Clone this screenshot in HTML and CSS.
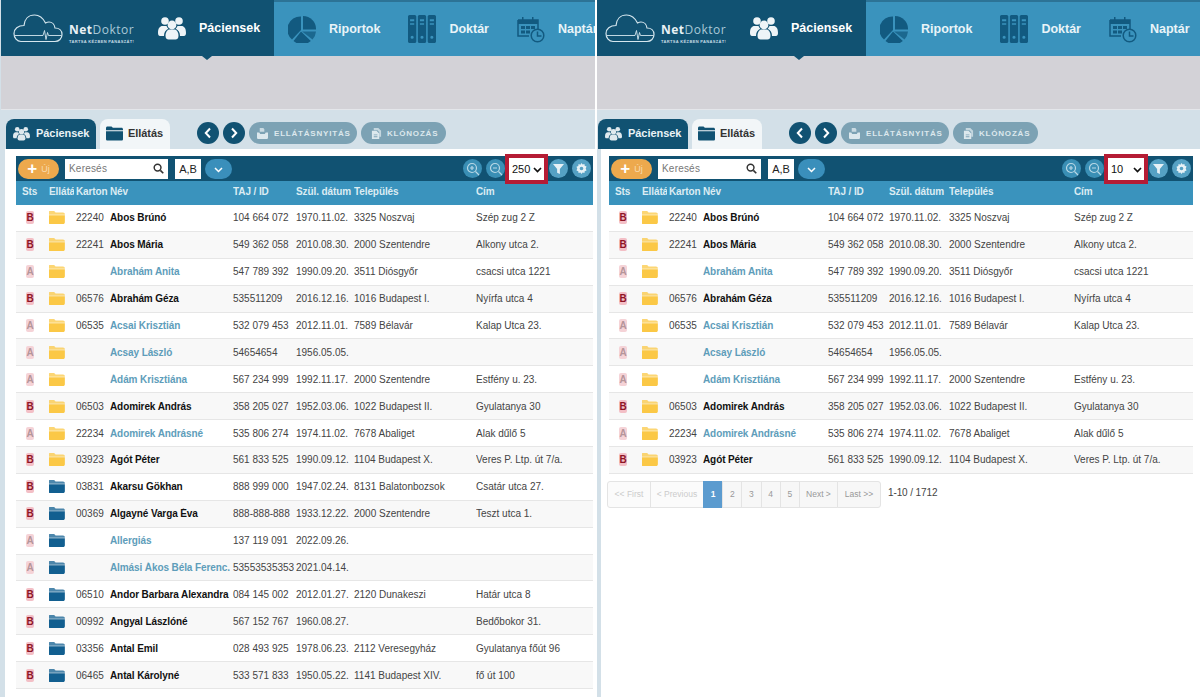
FILE: index.html
```html
<!DOCTYPE html>
<html lang="hu">

<head>
    <meta charset="UTF-8">
    <meta name="viewport" content="width=device-width, initial-scale=1.0">
    <title>NetDoktor</title>
    <link rel="stylesheet" href="styles.css">
</head>

<body>
    <svg class="sprite" xmlns="http://www.w3.org/2000/svg">
        <symbol id="i-users" viewBox="0 0 28 24">
            <circle cx="7" cy="5" r="3.8"/><circle cx="21" cy="5" r="3.8"/><circle cx="14" cy="9" r="4.4"/>
            <path d="M0 17c0-5 2-7 4.5-7h4c.5 1 1 2 1.800 2.800C7.500 14 6 16.500 6 20H2c-1.200 0-2-1-2-3z"/>
            <path d="M28 17c0-5-2-7-4.500-7h-4c-.5 1-1 2-1.800 2.800C20.500 14 22 16.500 22 20h4c1.200 0 2-1 2-3z"/>
            <path d="M7.500 20c0-4 2-6.500 4-6.500h5c2 0 4 2.500 4 6.500 0 2.500-1.500 3.500-3 3.500h-7c-1.500 0-3-1-3-3.500z"/>
        </symbol>
        <symbol id="i-pie" viewBox="0 0 28 28">
            <path d="M13 1.500v13.500l-9 9.500A13 13 0 0 1 13 1.500z"/>
            <path d="M15 14.500V1a13 13 0 0 1 13 13.500z"/>
            <path d="M14 16.500h14a13.500 13.500 0 0 1-3.500 8z" opacity=".75"/>
            <path d="M13 16.500l9.800 9.500A13 13 0 0 1 5.500 26z"/>
        </symbol>
        <symbol id="i-binders" viewBox="0 0 27 27">
            <path d="M0 1.500C0 .7.700 0 1.500 0h5C7.300 0 8 .7 8 1.500v24c0 .8-.7 1.500-1.500 1.500h-5C.7 27 0 26.300 0 25.500zM2 4v2h4V4zM2 8v1.500h4V8zM4 20a1.500 1.500 0 1 0 0 3 1.500 1.500 0 0 0 0-3z" fill-rule="evenodd"/>
            <path d="M9.500 1.500C9.500.7 10.200 0 11 0h5c.8 0 1.500.7 1.500 1.500v24c0 .8-.7 1.500-1.500 1.500h-5c-.8 0-1.500-.7-1.500-1.500zM11.500 4v2h4V4zM11.500 8v1.500h4V8zM13.500 20a1.500 1.500 0 1 0 0 3 1.500 1.500 0 0 0 0-3z" fill-rule="evenodd"/>
            <path d="M19 1.500C19 .7 19.700 0 20.500 0h5c.8 0 1.500.7 1.500 1.500v24c0 .8-.7 1.500-1.500 1.500h-5c-.8 0-1.500-.7-1.500-1.500zM21 4v2h4V4zM21 8v1.500h4V8zM23 20a1.500 1.500 0 1 0 0 3 1.500 1.500 0 0 0 0-3z" fill-rule="evenodd"/>
        </symbol>
        <symbol id="i-calendar" viewBox="0 0 28 28">
            <path d="M1 5h20v9" fill="none" stroke="currentColor" stroke-width="1.500"/>
            <path d="M1 5v16h11" fill="none" stroke="currentColor" stroke-width="1.500"/>
            <rect x="1" y="5" width="20" height="4"/>
            <rect x="5" y="2" width="1.500" height="5"/><rect x="15" y="2" width="1.500" height="5"/>
            <rect x="4" y="11" width="4" height="3"/><rect x="9" y="11" width="4" height="3"/><rect x="14" y="11" width="4" height="3"/>
            <rect x="4" y="15.500" width="4" height="3"/><rect x="9" y="15.500" width="4" height="3"/>
            <circle cx="20.500" cy="20.500" r="6.300" fill="none" stroke="currentColor" stroke-width="1.500"/>
            <path d="M20.500 16.500v4.500h4" fill="none" stroke="currentColor" stroke-width="1.500"/>
        </symbol>
        <symbol id="i-folder" viewBox="0 0 18 14">
            <path d="M0 2C0 .8.800 0 2 0h4.500L8 1.500h8c1.200 0 2 .8 2 2V4H0z" opacity=".75"/>
            <path d="M0 4.500h18V12c0 1.200-.8 2-2 2H2c-1.200 0-2-.8-2-2z"/>
        </symbol>
        <symbol id="i-tab-folder" viewBox="0 0 18 15">
            <path d="M0 1.500C0 .7.700 0 1.500 0h4.300L7.300 1.500h9.200c.8 0 1.500.7 1.500 1.500v1H0z"/>
            <path d="M0 5h18v8.500c0 .8-.7 1.500-1.500 1.500h-15C.7 15 0 14.300 0 13.500z"/>
        </symbol>
        <symbol id="i-search" viewBox="0 0 12 12">
            <circle cx="5" cy="5" r="3.700" fill="none" stroke="currentColor" stroke-width="1.600"/>
            <path d="M8 8l3.200 3.200" fill="none" stroke="currentColor" stroke-width="1.800"/>
        </symbol>
        <symbol id="i-zoom-in" viewBox="0 0 14 14">
            <circle cx="6" cy="6" r="4.500" fill="none" stroke="currentColor" stroke-width="1.200"/>
            <path d="M9.500 9.500l3.500 3.500M4 6h4M6 4v4" fill="none" stroke="currentColor" stroke-width="1.200"/>
        </symbol>
        <symbol id="i-zoom-out" viewBox="0 0 14 14">
            <circle cx="6" cy="6" r="4.500" fill="none" stroke="currentColor" stroke-width="1.200"/>
            <path d="M9.500 9.500l3.500 3.500M4 6h4" fill="none" stroke="currentColor" stroke-width="1.200"/>
        </symbol>
        <symbol id="i-filter" viewBox="0 0 12 12"><path d="M0 1h12L7.500 6.500V12l-3-1.500v-4z"/></symbol>
        <symbol id="i-gear" viewBox="0 0 12 12">
            <path d="M6 0l1.200 1.700 2-.6.300 2 2 .8-.9 2.100.9 2.100-2 .8-.3 2-2-.6L6 12l-1.200-1.700-2 .6-.3-2-2-.8.9-2.100L.5 4l2-.8.3-2 2 .6zM6 4a2 2 0 1 0 0 4 2 2 0 0 0 0-4z" fill-rule="evenodd"/>
        </symbol>
        <symbol id="i-open" viewBox="0 0 12 12">
            <path d="M3 0h4l1 1.500V4H3z" opacity=".8"/>
            <path d="M0 5h2.500l1 1.500h5l1-1.500H12v5.500c0 .8-.7 1.500-1.500 1.500h-9C.7 12 0 11.300 0 10.500z"/>
        </symbol>
        <symbol id="i-doc" viewBox="0 0 12 12">
            <path d="M3 0h5l3 3v6.500H9V4.500L7 2.500H3z" opacity=".75"/>
            <path d="M1 3h5l3 3v6H1zM3 7v1h4V7zM3 9v1h4V9z" fill-rule="evenodd"/>
        </symbol>
        <symbol id="i-prev" viewBox="0 0 8 12"><path d="M6 1.500L1.800 6 6 10.500" fill="none" stroke="currentColor" stroke-width="2"/></symbol>
        <symbol id="i-next" viewBox="0 0 8 12"><path d="M2 1.500L6.200 6 2 10.500" fill="none" stroke="currentColor" stroke-width="2"/></symbol>
        <symbol id="i-logo" viewBox="0 0 50 29">
            <path d="M8 27.500h34c4 0 7-3 7-7s-3-6.500-7-6.500c-.5-3.500-3-6-6-6-1.500 0-2.500.5-3.500 1C30 4 26 1 21.500 1c-6 0-10 4-10.500 10.500C5 11.500 1 15 1 19.500s3 8 7 8z" fill="none" stroke="currentColor" stroke-width="1.200"/>
            <path d="M2 21.500h28l1.500-5 1.500 9 1.500-7 1 3h13" fill="none" stroke="currentColor" stroke-width=".9"/>
        </symbol>
    </svg>

    <div class="page">
        <section class="panel panel-left">
            <div class="panel-inner">
                <header class="topbar">
                    <div class="brand-area">
                        <div class="brand">
                            <svg class="brand-cloud"><use href="#i-logo"/></svg>
                            <div class="brand-text">
                                <p class="brand-name"><b>Net</b>Doktor</p>
                                <p class="brand-tag">TARTSA KÉZBEN PANASZÁT!</p>
                            </div>
                        </div>
                        <a class="nav-item active"><svg class="nav-icon"><use href="#i-users"/></svg>Páciensek</a>
                    </div>
                    <nav class="nav">
                        <a class="nav-item"><svg class="nav-icon"><use href="#i-pie"/></svg>Riportok</a>
                        <a class="nav-item"><svg class="nav-icon"><use href="#i-binders"/></svg>Doktár</a>
                        <a class="nav-item"><svg class="nav-icon"><use href="#i-calendar"/></svg>Naptár</a>
                    </nav>
                </header>
                <div class="gray-band"></div>
                <div class="tabbar">
                    <a class="tab tab-dark"><svg class="tab-icon"><use href="#i-users"/></svg>Páciensek</a>
                    <a class="tab tab-light"><svg class="tab-icon"><use href="#i-tab-folder"/></svg>Ellátás</a>
                    <div class="tab-actions">
                        <button class="round-btn"><svg class="round-icon"><use href="#i-prev"/></svg></button>
                        <button class="round-btn"><svg class="round-icon"><use href="#i-next"/></svg></button>
                        <button class="pill pill-wide"><svg class="pill-icon"><use href="#i-open"/></svg>ELLÁTÁSNYITÁS</button>
                        <button class="pill"><svg class="pill-icon"><use href="#i-doc"/></svg>KLÓNOZÁS</button>
                    </div>
                </div>
                <div class="content">
                    <div class="grid">
                        <div class="toolbar">
                            <button class="new-btn"><span class="plus">+</span>Új</button>
                            <div class="search"><span>Keresés</span><svg class="search-icon"><use href="#i-search"/></svg></div>
                            <div class="ab-box">A,B</div>
                            <button class="chevron-btn"><svg width="9" height="6" viewBox="0 0 9 6"><path d="M1 1l3.500 3.500L8 1" fill="none" stroke="#fff" stroke-width="1.500"/></svg></button>
                            <div class="tools">
                                <span class="tool"><svg class="tool-line"><use href="#i-zoom-in"/></svg></span>
                                <span class="tool"><svg class="tool-line"><use href="#i-zoom-out"/></svg></span>
                                <div class="page-size">
                                    <select><option>250</option></select>
                                    <svg class="select-arrow" viewBox="0 0 9 6"><path d="M1 1l3.500 3.500L8 1" fill="none" stroke="#111" stroke-width="1.700"/></svg>
                                </div>
                                <span class="tool tool-solid"><svg class="tool-small"><use href="#i-filter"/></svg></span>
                                <span class="tool tool-solid"><svg class="tool-small"><use href="#i-gear"/></svg></span>
                            </div>
                        </div>
                        <div class="row head"><span>Sts</span><span>Ellátás</span><span>Karton</span><span>Név</span><span>TAJ / ID</span><span>Szül. dátum</span><span>Település</span><span>Cím</span></div>

                        <div class="row"><span><i class="badge">B</i></span><span><svg class="folder yellow"><use href="#i-folder"/></svg></span><span>22240</span><span class="name">Abos Brúnó</span><span>104 664 072</span><span>1970.11.02.</span><span>3325 Noszvaj</span><span>Szép zug 2 Z</span></div>
                        <div class="row"><span><i class="badge">B</i></span><span><svg class="folder yellow"><use href="#i-folder"/></svg></span><span>22241</span><span class="name">Abos Mária</span><span>549 362 058</span><span>2010.08.30.</span><span>2000 Szentendre</span><span>Alkony utca 2.</span></div>
                        <div class="row"><span><i class="badge faded">A</i></span><span><svg class="folder yellow"><use href="#i-folder"/></svg></span><span></span><span class="name link">Ábrahám Anita</span><span>547 789 392</span><span>1990.09.20.</span><span>3511 Diósgyőr</span><span>csacsi utca 1221</span></div>
                        <div class="row"><span><i class="badge">B</i></span><span><svg class="folder yellow"><use href="#i-folder"/></svg></span><span>06576</span><span class="name">Ábrahám Géza</span><span>535511209</span><span>2016.12.16.</span><span>1016 Budapest I.</span><span>Nyírfa utca 4</span></div>
                        <div class="row"><span><i class="badge faded">A</i></span><span><svg class="folder yellow"><use href="#i-folder"/></svg></span><span>06535</span><span class="name link">Acsai Krisztián</span><span>532 079 453</span><span>2012.11.01.</span><span>7589 Bélavár</span><span>Kalap Utca 23.</span></div>
                        <div class="row"><span><i class="badge faded">A</i></span><span><svg class="folder yellow"><use href="#i-folder"/></svg></span><span></span><span class="name link">Acsay László</span><span>54654654</span><span>1956.05.05.</span><span></span><span></span></div>
                        <div class="row"><span><i class="badge faded">A</i></span><span><svg class="folder yellow"><use href="#i-folder"/></svg></span><span></span><span class="name link">Ádám Krisztiána</span><span>567 234 999</span><span>1992.11.17.</span><span>2000 Szentendre</span><span>Estfény u. 23.</span></div>
                        <div class="row"><span><i class="badge">B</i></span><span><svg class="folder yellow"><use href="#i-folder"/></svg></span><span>06503</span><span class="name">Adomirek András</span><span>358 205 027</span><span>1952.03.06.</span><span>1022 Budapest II.</span><span>Gyulatanya 30</span></div>
                        <div class="row"><span><i class="badge faded">A</i></span><span><svg class="folder yellow"><use href="#i-folder"/></svg></span><span>22234</span><span class="name link">Adomirek Andrásné</span><span>535 806 274</span><span>1974.11.02.</span><span>7678 Abaliget</span><span>Alak dűlő 5</span></div>
                        <div class="row"><span><i class="badge">B</i></span><span><svg class="folder yellow"><use href="#i-folder"/></svg></span><span>03923</span><span class="name">Agót Péter</span><span>561 833 525</span><span>1990.09.12.</span><span>1104 Budapest X.</span><span>Veres P. Ltp. út 7/a.</span></div>
                        <div class="row"><span><i class="badge">B</i></span><span><svg class="folder blue"><use href="#i-folder"/></svg></span><span>03831</span><span class="name">Akarsu Gökhan</span><span>888 999 000</span><span>1947.02.24.</span><span>8131 Balatonbozsok</span><span>Csatár utca 27.</span></div>
                        <div class="row"><span><i class="badge">B</i></span><span><svg class="folder blue"><use href="#i-folder"/></svg></span><span>00369</span><span class="name">Algayné Varga Éva</span><span>888-888-888</span><span>1933.12.22.</span><span>2000 Szentendre</span><span>Teszt utca 1.</span></div>
                        <div class="row"><span><i class="badge faded">A</i></span><span><svg class="folder blue"><use href="#i-folder"/></svg></span><span></span><span class="name link">Allergiás</span><span>137 119 091</span><span>2022.09.26.</span><span></span><span></span></div>
                        <div class="row"><span><i class="badge faded">A</i></span><span><svg class="folder blue"><use href="#i-folder"/></svg></span><span></span><span class="name link">Almási Ákos Béla Ferenc.</span><span>53553535353</span><span>2021.04.14.</span><span></span><span></span></div>
                        <div class="row"><span><i class="badge">B</i></span><span><svg class="folder blue"><use href="#i-folder"/></svg></span><span>06510</span><span class="name">Andor Barbara Alexandra</span><span>084 145 002</span><span>2012.01.27.</span><span>2120 Dunakeszi</span><span>Határ utca 8</span></div>
                        <div class="row"><span><i class="badge">B</i></span><span><svg class="folder blue"><use href="#i-folder"/></svg></span><span>00992</span><span class="name">Angyal Lászlóné</span><span>567 152 767</span><span>1960.08.27.</span><span></span><span>Bedőbokor 31.</span></div>
                        <div class="row"><span><i class="badge">B</i></span><span><svg class="folder blue"><use href="#i-folder"/></svg></span><span>03356</span><span class="name">Antal Emil</span><span>028 493 925</span><span>1978.06.23.</span><span>2112 Veresegyház</span><span>Gyulatanya főút 96</span></div>
                        <div class="row"><span><i class="badge">B</i></span><span><svg class="folder blue"><use href="#i-folder"/></svg></span><span>06465</span><span class="name">Antal Károlyné</span><span>533 571 833</span><span>1950.05.22.</span><span>1141 Budapest XIV.</span><span>fő út 100</span></div>
                        <div class="row"></div>
                    </div>
                </div>
            </div>
        </section>

        <section class="panel panel-right">
            <div class="panel-inner">
                <header class="topbar">
                    <div class="brand-area">
                        <div class="brand">
                            <svg class="brand-cloud"><use href="#i-logo"/></svg>
                            <div class="brand-text">
                                <p class="brand-name"><b>Net</b>Doktor</p>
                                <p class="brand-tag">TARTSA KÉZBEN PANASZÁT!</p>
                            </div>
                        </div>
                        <a class="nav-item active"><svg class="nav-icon"><use href="#i-users"/></svg>Páciensek</a>
                    </div>
                    <nav class="nav">
                        <a class="nav-item"><svg class="nav-icon"><use href="#i-pie"/></svg>Riportok</a>
                        <a class="nav-item"><svg class="nav-icon"><use href="#i-binders"/></svg>Doktár</a>
                        <a class="nav-item"><svg class="nav-icon"><use href="#i-calendar"/></svg>Naptár</a>
                    </nav>
                </header>
                <div class="gray-band"></div>
                <div class="tabbar">
                    <a class="tab tab-dark"><svg class="tab-icon"><use href="#i-users"/></svg>Páciensek</a>
                    <a class="tab tab-light"><svg class="tab-icon"><use href="#i-tab-folder"/></svg>Ellátás</a>
                    <div class="tab-actions">
                        <button class="round-btn"><svg class="round-icon"><use href="#i-prev"/></svg></button>
                        <button class="round-btn"><svg class="round-icon"><use href="#i-next"/></svg></button>
                        <button class="pill pill-wide"><svg class="pill-icon"><use href="#i-open"/></svg>ELLÁTÁSNYITÁS</button>
                        <button class="pill"><svg class="pill-icon"><use href="#i-doc"/></svg>KLÓNOZÁS</button>
                    </div>
                </div>
                <div class="content">
                    <div class="grid">
                        <div class="toolbar">
                            <button class="new-btn"><span class="plus">+</span>Új</button>
                            <div class="search"><span>Keresés</span><svg class="search-icon"><use href="#i-search"/></svg></div>
                            <div class="ab-box">A,B</div>
                            <button class="chevron-btn"><svg width="9" height="6" viewBox="0 0 9 6"><path d="M1 1l3.500 3.500L8 1" fill="none" stroke="#fff" stroke-width="1.500"/></svg></button>
                            <div class="tools">
                                <span class="tool"><svg class="tool-line"><use href="#i-zoom-in"/></svg></span>
                                <span class="tool"><svg class="tool-line"><use href="#i-zoom-out"/></svg></span>
                                <div class="page-size">
                                    <select><option>10</option></select>
                                    <svg class="select-arrow" viewBox="0 0 9 6"><path d="M1 1l3.500 3.500L8 1" fill="none" stroke="#111" stroke-width="1.700"/></svg>
                                </div>
                                <span class="tool tool-solid"><svg class="tool-small"><use href="#i-filter"/></svg></span>
                                <span class="tool tool-solid"><svg class="tool-small"><use href="#i-gear"/></svg></span>
                            </div>
                        </div>
                        <div class="row head"><span>Sts</span><span>Ellátás</span><span>Karton</span><span>Név</span><span>TAJ / ID</span><span>Szül. dátum</span><span>Település</span><span>Cím</span></div>

                        <div class="row"><span><i class="badge">B</i></span><span><svg class="folder yellow"><use href="#i-folder"/></svg></span><span>22240</span><span class="name">Abos Brúnó</span><span>104 664 072</span><span>1970.11.02.</span><span>3325 Noszvaj</span><span>Szép zug 2 Z</span></div>
                        <div class="row"><span><i class="badge">B</i></span><span><svg class="folder yellow"><use href="#i-folder"/></svg></span><span>22241</span><span class="name">Abos Mária</span><span>549 362 058</span><span>2010.08.30.</span><span>2000 Szentendre</span><span>Alkony utca 2.</span></div>
                        <div class="row"><span><i class="badge faded">A</i></span><span><svg class="folder yellow"><use href="#i-folder"/></svg></span><span></span><span class="name link">Ábrahám Anita</span><span>547 789 392</span><span>1990.09.20.</span><span>3511 Diósgyőr</span><span>csacsi utca 1221</span></div>
                        <div class="row"><span><i class="badge">B</i></span><span><svg class="folder yellow"><use href="#i-folder"/></svg></span><span>06576</span><span class="name">Ábrahám Géza</span><span>535511209</span><span>2016.12.16.</span><span>1016 Budapest I.</span><span>Nyírfa utca 4</span></div>
                        <div class="row"><span><i class="badge faded">A</i></span><span><svg class="folder yellow"><use href="#i-folder"/></svg></span><span>06535</span><span class="name link">Acsai Krisztián</span><span>532 079 453</span><span>2012.11.01.</span><span>7589 Bélavár</span><span>Kalap Utca 23.</span></div>
                        <div class="row"><span><i class="badge faded">A</i></span><span><svg class="folder yellow"><use href="#i-folder"/></svg></span><span></span><span class="name link">Acsay László</span><span>54654654</span><span>1956.05.05.</span><span></span><span></span></div>
                        <div class="row"><span><i class="badge faded">A</i></span><span><svg class="folder yellow"><use href="#i-folder"/></svg></span><span></span><span class="name link">Ádám Krisztiána</span><span>567 234 999</span><span>1992.11.17.</span><span>2000 Szentendre</span><span>Estfény u. 23.</span></div>
                        <div class="row"><span><i class="badge">B</i></span><span><svg class="folder yellow"><use href="#i-folder"/></svg></span><span>06503</span><span class="name">Adomirek András</span><span>358 205 027</span><span>1952.03.06.</span><span>1022 Budapest II.</span><span>Gyulatanya 30</span></div>
                        <div class="row"><span><i class="badge faded">A</i></span><span><svg class="folder yellow"><use href="#i-folder"/></svg></span><span>22234</span><span class="name link">Adomirek Andrásné</span><span>535 806 274</span><span>1974.11.02.</span><span>7678 Abaliget</span><span>Alak dűlő 5</span></div>
                        <div class="row"><span><i class="badge">B</i></span><span><svg class="folder yellow"><use href="#i-folder"/></svg></span><span>03923</span><span class="name">Agót Péter</span><span>561 833 525</span><span>1990.09.12.</span><span>1104 Budapest X.</span><span>Veres P. Ltp. út 7/a.</span></div>
                    </div>
                    <div class="pager-row">
                        <div class="pager">
                            <a class="pg pg-first off">&lt;&lt; First</a>
                            <a class="pg pg-prev off">&lt; Previous</a>
                            <a class="pg pg-num current">1</a>
                            <a class="pg pg-num">2</a>
                            <a class="pg pg-num">3</a>
                            <a class="pg pg-num">4</a>
                            <a class="pg pg-num">5</a>
                            <a class="pg pg-next">Next &gt;</a>
                            <a class="pg pg-last">Last &gt;&gt;</a>
                        </div>
                        <p class="pager-info">1-10 / 1712</p>
                    </div>
                </div>
            </div>
        </section>
    </div>
</body>

</html>
```

FILE: styles.css
```css
* {
    box-sizing: border-box;
}

html, body {
    height: 697px;
    margin: 0;
    overflow: hidden;
}

body {
    background-color: #fff;
    font-family: "Liberation Sans", Arial, sans-serif;
    font-size: 10px;
    color: #333;
}

p {
    margin: 0;
}

.sprite {
    display: none;
}

.page {
    display: flex;
    height: 697px;
}

.panel {
    height: 697px;
    overflow: hidden;
    flex: none;
}

.panel-left {
    width: 595px;
    margin-right: 2px;
}

.panel-right {
    width: 603px;
}

.panel-inner {
    height: 697px;
    background-color: #d3e0e8;
    display: flex;
    flex-direction: column;
}

.panel-left .panel-inner {
    padding-left: 1px;
}

/* right shot sits 4px further under the divider */
.panel-right .panel-inner {
    margin-left: -4px;
}

/* top bar */
.topbar {
    display: flex;
    height: 56px;
    flex: none;
    background-color: #3a93bd;
    border-top: 2px solid #2c7396;
}

.brand-area {
    display: flex;
    align-items: center;
    width: 273px;
    margin-top: -2px;
    background-color: #115272;
    flex: none;
}

.brand {
    display: flex;
    align-items: center;
    width: 157px;
    padding-left: 12px;
    color: #d5e6ee;
    flex: none;
}

.brand-cloud {
    width: 50px;
    height: 29px;
    margin-right: 6px;
    flex: none;
}

.brand-text {
    padding-top: 10px;
}

.brand-name {
    font-family: "Open Sans", "Liberation Sans", sans-serif;
    font-size: 12px;
    letter-spacing: 0.5px;
    line-height: 14px;
    color: #a9c9d8;
}

.brand-name b {
    color: #e8f1f5;
}

.brand-tag {
    margin-top: 2px;
    font-size: 4px;
    line-height: 5px;
    letter-spacing: 0.35px;
    font-weight: bold;
    white-space: nowrap;
    color: #c4dbe5;
}

.nav {
    display: flex;
    padding-left: 14px;
    gap: 28px;
    white-space: nowrap;
}

.nav-item {
    position: relative;
    display: flex;
    align-items: center;
    gap: 13px;
    font-size: 12.5px;
    font-weight: bold;
    color: #e9f4f8;
}

.nav-icon {
    width: 28px;
    height: 28px;
    fill: #125a80;
    color: #125a80;
    flex: none;
}

.active {
    color: #fff;
    height: 100%;
}

.active .nav-icon {
    fill: #eef4f7;
}

.active::after {
    content: "";
    position: absolute;
    left: 44px;
    bottom: -4px;
    border-left: 5px solid transparent;
    border-right: 5px solid transparent;
    border-top: 4px solid #115272;
}

.gray-band {
    height: 54px;
    flex: none;
    background-color: #d3d2d7;
    border-bottom: 1px solid #e4e6ea;
}

/* tabs */
.tabbar {
    display: flex;
    align-items: flex-end;
    height: 39px;
    flex: none;
    padding-left: 5px;
}

.tab {
    display: flex;
    align-items: center;
    height: 30px;
    padding-bottom: 2px;
    border-radius: 8px 8px 0 0;
    font-size: 11px;
    font-weight: bold;
    letter-spacing: -0.05px;
}

.tab-dark {
    width: 90px;
    padding-left: 7px;
    gap: 6px;
    background-color: #115272;
    color: #e9f2f6;
}

.tab-light {
    width: 70px;
    margin-left: 4px;
    padding-left: 6px;
    gap: 5px;
    background-color: #f2f6f8;
    color: #333;
}

.tab-icon {
    width: 17px;
    height: 15px;
    flex: none;
    fill: #dfe9ee;
}

.tab-light .tab-icon {
    fill: #115272;
}

.tab-actions {
    display: flex;
    align-items: center;
    gap: 4px;
    margin-left: 27px;
    padding-bottom: 5px;
}

.round-btn {
    display: flex;
    align-items: center;
    justify-content: center;
    width: 22px;
    height: 22px;
    padding: 0;
    border: none;
    border-radius: 50%;
    background-color: #115272;
    color: #fff;
}

.round-icon {
    width: 8px;
    height: 12px;
}

.pill {
    display: flex;
    align-items: center;
    gap: 5px;
    width: 85px;
    height: 22px;
    padding: 0 0 0 10px;
    border: none;
    border-radius: 11px;
    background-color: #7ca2b4;
    color: #dce8ed;
    font-family: "Liberation Sans", sans-serif;
    font-size: 8px;
    font-weight: bold;
    letter-spacing: 0.8px;
    white-space: nowrap;
}

.pill-wide {
    width: 108px;
    padding-left: 8px;
    gap: 6px;
}

.pill-icon {
    width: 11px;
    height: 11px;
    flex: none;
    fill: #dce8ed;
}

/* list area */
.content {
    flex: 1;
    margin-left: 4px;
    padding: 7px 2px 0 11px;
    background-color: #fff;
}

.panel-right .content {
    margin-left: 8px;
    padding: 7px 7px 0 8px;
}

.toolbar {
    display: flex;
    align-items: center;
    height: 25px;
    padding-left: 2px;
    background-color: #115272;
}

.new-btn {
    display: flex;
    align-items: center;
    justify-content: center;
    gap: 4px;
    width: 41px;
    height: 20px;
    padding: 0;
    border: none;
    border-radius: 10px;
    background-color: #eda94d;
    color: #f8dcae;
    font-family: "Liberation Sans", sans-serif;
    font-size: 9px;
}

.plus {
    color: #fff;
    font-size: 17px;
    font-weight: bold;
    line-height: 17px;
}

.search {
    display: flex;
    align-items: center;
    justify-content: space-between;
    width: 103px;
    height: 20px;
    margin-left: 6px;
    padding: 0 4px 1px;
    background-color: #fff;
    color: #777;
    font-size: 10px;
    letter-spacing: 0.2px;
}

.search-icon {
    width: 11px;
    height: 11px;
    fill: #333;
    color: #333;
}

.ab-box {
    display: flex;
    align-items: center;
    justify-content: center;
    width: 26px;
    height: 20px;
    margin-left: 7px;
    background-color: #fff;
    color: #222;
    font-size: 11px;
}

.chevron-btn {
    width: 27px;
    height: 20px;
    margin-left: 4px;
    padding: 0;
    border: none;
    border-radius: 10px;
    background-color: #3a8fbb;
}

.tools {
    display: flex;
    align-items: center;
    margin-left: auto;
    padding-right: 2px;
    gap: 4px;
}

.tool {
    display: flex;
    align-items: center;
    justify-content: center;
    width: 19px;
    height: 19px;
    border-radius: 50%;
    background-color: #3a8fb5;
}

.tool-line {
    width: 14px;
    height: 14px;
    color: #b8d8e6;
}

.tool-solid {
    background-color: #55a1c4;
}

.tool-small {
    width: 11px;
    height: 11px;
    fill: #e6f1f6;
}

/* the red frame is part of the screenshot, it sticks out of the toolbar */
.page-size {
    position: relative;
    width: 43px;
    height: 30px;
    margin: 0 -3px 0 -4px;
    border: 4px solid #b51c35;
    background-color: #fff;
    flex: none;
}

.panel-right .page-size {
    width: 44px;
}

.page-size select {
    width: 100%;
    height: 100%;
    padding: 0 0 0 3px;
    border: none;
    outline: none;
    appearance: none;
    background-color: transparent;
    color: #111;
    font-family: "Liberation Sans", sans-serif;
    font-size: 11px;
}

.select-arrow {
    position: absolute;
    top: 9px;
    right: 2px;
    width: 9px;
    height: 6px;
    pointer-events: none;
}

.row {
    display: grid;
    grid-template-columns: 27px 27px 34px 123px 63px 58px 122px 1fr;
    align-items: center;
    height: 26.9px;
    padding-left: 6px;
    border-bottom: 1px solid #e6e6e6;
    color: #444;
    font-size: 10px;
    background-color: #fff;
}

.panel-right .row {
    grid-template-columns: 27px 27px 34px 125px 61px 60px 125px 1fr;
}

.row:nth-child(even) {
    background-color: #f8f8f8;
}

.row > span {
    margin-right: 2px;
    overflow: hidden;
    white-space: nowrap;
}

.row.head {
    height: 24px;
    padding-bottom: 3px;
    border-bottom: none;
    background-color: #3a93bd;
    color: #dcecf3;
    font-weight: bold;
    letter-spacing: -0.1px;
}

.name {
    color: #111;
    font-weight: bold;
    letter-spacing: -0.1px;
}

.link {
    color: #5e9dba;
}

.badge {
    display: block;
    width: 8px;
    height: 13px;
    margin-left: 4px;
    border-radius: 2px;
    background-color: #f3bfc6;
    color: #8e1526;
    font-size: 10px;
    font-style: normal;
    font-weight: bold;
    line-height: 13px;
    text-align: center;
}

.faded {
    background-color: #f5d3d7;
    color: #b5959a;
}

.folder {
    display: block;
    width: 17px;
    height: 13px;
    margin-left: -1px;
}

.yellow {
    fill: #fbc846;
}

.blue {
    fill: #125f90;
}

/* pager */
.pager-row {
    display: flex;
    align-items: flex-start;
    margin: 7px 0 0 -2px;
    gap: 7px;
}

.pager {
    display: flex;
    height: 27px;
}

.pg {
    display: flex;
    align-items: center;
    justify-content: center;
    height: 27px;
    margin-right: -1px;
    border: 1px solid #e4e4e4;
    background-color: #f7f7f7;
    color: #999;
    font-size: 8.5px;
}

.off {
    color: #cbcbcb;
    background-color: #fbfbfb;
}

.pg-first {
    width: 44px;
    border-radius: 3px 0 0 3px;
}

.pg-prev {
    width: 54px;
}

.pg-num {
    width: 20.2px;
}

.current {
    background-color: #5b9bcf;
    border-color: #5b9bcf;
    color: #fff;
    font-weight: bold;
}

.pg-next {
    width: 39px;
}

.pg-last {
    width: 44px;
    margin-right: 0;
    border-radius: 0 3px 3px 0;
}

.pager-info {
    padding-top: 6px;
    color: #444;
    font-size: 10px;
    letter-spacing: -0.1px;
}
```
